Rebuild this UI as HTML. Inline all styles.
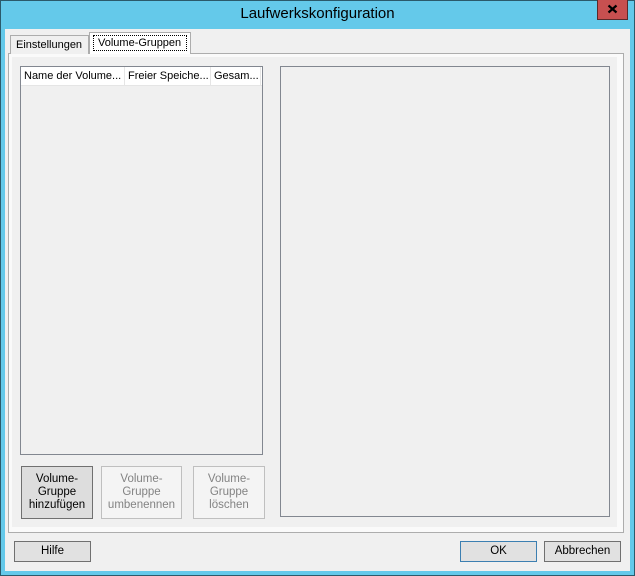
<!DOCTYPE html><html><head><style>
*{margin:0;padding:0;box-sizing:border-box}
body{width:635px;height:576px;overflow:hidden;font-family:"Liberation Sans",sans-serif;font-size:11.5px;color:#000;background:#62c9ea;position:relative}
div{position:absolute;white-space:nowrap}
.btn{text-align:center;line-height:13px;display:flex;align-items:center;justify-content:center}
</style></head><body>
<div style="left:0;top:0;width:635px;height:576px;border:1px solid #2b5a6b;background:#64c9ea"></div>
<div style="left:0;top:5px;width:635px;text-align:center;font-size:15px;color:#000">Laufwerkskonfiguration</div>
<div style="left:597px;top:0;width:31px;height:20px;background:#c75050;border:1px solid #5a2a2a;border-top:none"><svg width="29" height="19" style="position:absolute;left:0;top:0"><path d="M10.5 5.5l8 7M18.5 5.5l-8 7" stroke="#000" stroke-width="2.2"/></svg></div>
<div style="left:5px;top:29px;width:625px;height:542px;background:#f0f0f0"></div>
<div style="left:8px;top:53px;width:616px;height:480px;border:1px solid #adadad;background:#fafafa"></div>
<div style="left:12px;top:57px;width:605px;height:470px;background:#f0f0f0"></div>
<div style="left:10px;top:35px;width:79px;height:19px;border:1px solid #adadad;border-bottom:none;background:#f0f0f0;padding:3px 0 0 5px;font-size:11px">Einstellungen</div>
<div style="left:89px;top:32px;width:102px;height:22px;border:1px solid #adadad;border-bottom:none;background:#fff"><div style="left:3px;top:2px;width:94px;height:16px;border:1px dotted #000;padding:1px 0 0 4px;font-size:11px">Volume-Gruppen</div></div>
<div style="left:20px;top:66px;width:243px;height:389px;border:1px solid #828790;background:#f0f0f0"></div>
<div style="left:21px;top:67px;width:241px;height:19px;background:#fff;border-bottom:1px solid #e5e5e5"></div>
<div style="left:24px;top:70px;font-size:11px">Name der Volume...</div>
<div style="left:124px;top:67px;width:1px;height:19px;background:#e5e5e5"></div>
<div style="left:128px;top:70px;font-size:11px">Freier Speiche...</div>
<div style="left:210px;top:67px;width:1px;height:19px;background:#e5e5e5"></div>
<div style="left:214px;top:70px;font-size:11px">Gesam...</div>
<div style="left:260px;top:67px;width:1px;height:19px;background:#e5e5e5"></div>
<div style="left:280px;top:66px;width:330px;height:451px;border:1px solid #828790"></div>
<div class="btn" style="left:21px;top:466px;width:72px;height:53px;border:1px solid #707070;background:#dddddd">Volume-<br>Gruppe<br>hinzufügen</div>
<div class="btn" style="left:101px;top:466px;width:81px;height:53px;border:1px solid #bfbfbf;background:#f4f4f4;color:#838383">Volume-<br>Gruppe<br>umbenennen</div>
<div class="btn" style="left:193px;top:466px;width:72px;height:53px;border:1px solid #bfbfbf;background:#f4f4f4;color:#838383">Volume-<br>Gruppe<br>löschen</div>
<div class="btn" style="left:14px;top:541px;width:77px;height:21px;border:1px solid #707070;background:#e1e1e1">Hilfe</div>
<div class="btn" style="left:460px;top:541px;width:77px;height:21px;border:1px solid #3c7fb1;background:#e1e1e1">OK</div>
<div class="btn" style="left:544px;top:541px;width:77px;height:21px;border:1px solid #707070;background:#e1e1e1">Abbrechen</div>
</body></html>
